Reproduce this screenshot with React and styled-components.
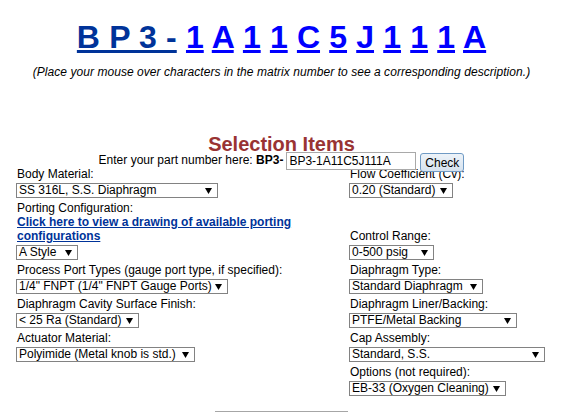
import React from 'react';
import styled, { createGlobalStyle } from 'styled-components';

const GlobalStyle = createGlobalStyle`
  html, body {
    margin: 0;
    padding: 0;
    background: #fff;
    overflow: hidden;
  }
  body {
    font-family: "Liberation Sans", Arial, sans-serif;
    font-size: 12px;
    color: #000;
  }
`;

const Page = styled.div`
  width: 563px;
  height: 412px;
  overflow: hidden;
`;

const Matrix = styled.div`
  margin-top: 19px;
  text-align: center;
  font-size: 32px;
  line-height: 37px;
  font-weight: bold;
  white-space: pre;
  word-spacing: 0.3px;
`;

const MatrixChar = styled.a`
  color: ${(p) => (p.$base ? '#003399' : '#0000ff')};
  text-decoration: underline;
  cursor: pointer;
`;

const Hint = styled.div`
  margin-top: 9px;
  text-align: center;
  font-style: italic;
  line-height: 14px;
  letter-spacing: 0.05px;
`;

const SectionTitle = styled.div`
  margin-top: 57px;
  text-align: center;
  font-size: 20px;
  line-height: 17px;
  font-weight: bold;
  color: #993333;
`;

const PartRow = styled.div`
  display: flex;
  justify-content: center;
  align-items: flex-start;
  height: 14px;
  line-height: 14px;
  position: relative;
  z-index: 1;
`;

const PartInput = styled.div`
  box-sizing: border-box;
  width: 130px;
  height: 18px;
  margin-left: 3px;
  margin-top: -1px;
  padding: 1px 2px;
  border: 1px solid #a9a9a9;
  background: #fff;
  line-height: 14px;
`;

const CheckButton = styled.button`
  box-sizing: border-box;
  width: 44px;
  height: 19px;
  margin-left: 4px;
  padding: 0;
  font: inherit;
  color: #000;
  border: 1px solid #6f9ac4;
  border-radius: 3px;
  background: linear-gradient(#edf3f9, #d6e2ee);
  line-height: 16px;
`;

const Table = styled.div`
  display: grid;
  grid-template-columns: 333px 1fr;
  align-items: end;
  width: 531px;
  margin-left: 16px;
`;

const Field = styled.div`
  padding-bottom: 3px;
`;

const Label = styled.div`
  line-height: 14px;
  padding-left: 1px;
`;

const PortLink = styled.a`
  display: block;
  padding-left: 1px;
  line-height: 14px;
  font-weight: bold;
  color: #003399;
  text-decoration: underline;
  cursor: pointer;
`;

const Select = styled.div`
  box-sizing: border-box;
  display: flex;
  align-items: center;
  justify-content: space-between;
  width: ${(p) => p.$w}px;
  height: 15px;
  margin-top: 2px;
  padding: 0 5px 0 2px;
  border: 1px solid #828282;
  background: #fff;
  line-height: 13px;
  white-space: nowrap;
`;

const Arrow = () => (
  <svg width="7" height="6" viewBox="0 0 7 6">
    <polygon points="0,0 7,0 3.5,6" fill="#000" />
  </svg>
);

const Dropdown = ({ w, value }) => (
  <Select $w={w}>
    <span>{value}</span>
    <Arrow />
  </Select>
);

const Item = ({ label, w, value }) => (
  <Field>
    <Label>{label}</Label>
    <Dropdown w={w} value={value} />
  </Field>
);

const Footer = styled.div`
  box-sizing: border-box;
  width: 133px;
  height: 24px;
  margin: 12px auto 0;
  border: 1px solid #a6a6a6;
`;

const chars = ['1', 'A', '1', '1', 'C', '5', 'J', '1', '1', '1', 'A'];

export default function App() {
  return (
    <Page>
      <GlobalStyle />
      <Matrix>
        <MatrixChar $base>B P 3 -</MatrixChar>
        {chars.map((c, i) => (
          <React.Fragment key={i}>
            {' '}
            <MatrixChar>{c}</MatrixChar>
          </React.Fragment>
        ))}
      </Matrix>
      <Hint>(Place your mouse over characters in the matrix number to see a corresponding description.)</Hint>
      <SectionTitle>Selection Items</SectionTitle>
      <PartRow>
        <span>Enter your part number here:&nbsp;<b>BP3-</b></span>
        <PartInput>BP3-1A11C5J111A</PartInput>
        <CheckButton>Check</CheckButton>
      </PartRow>
      <Table>
        <Item label="Body Material:" w={202} value="SS 316L, S.S. Diaphragm" />
        <Item label="Flow Coefficient (Cv):" w={104} value="0.20 (Standard)" />

        <Field>
          <Label>Porting Configuration:</Label>
          <PortLink>Click here to view a drawing of available porting configurations</PortLink>
          <Dropdown w={62} value="A Style" />
        </Field>
        <Item label="Control Range:" w={85} value="0-500 psig" />

        <Item label="Process Port Types (gauge port type, if specified):" w={212} value={'1/4" FNPT (1/4" FNPT Gauge Ports)'} />
        <Item label="Diaphragm Type:" w={134} value="Standard Diaphragm" />

        <Item label="Diaphragm Cavity Surface Finish:" w={123} value="< 25 Ra (Standard)" />
        <Item label="Diaphragm Liner/Backing:" w={168} value="PTFE/Metal Backing" />

        <Item label="Actuator Material:" w={179} value="Polyimide (Metal knob is std.)" />
        <Item label="Cap Assembly:" w={196} value="Standard, S.S." />

        <div />
        <Item label="Options (not required):" w={157} value="EB-33 (Oxygen Cleaning)" />
      </Table>
      <Footer />
    </Page>
  );
}
